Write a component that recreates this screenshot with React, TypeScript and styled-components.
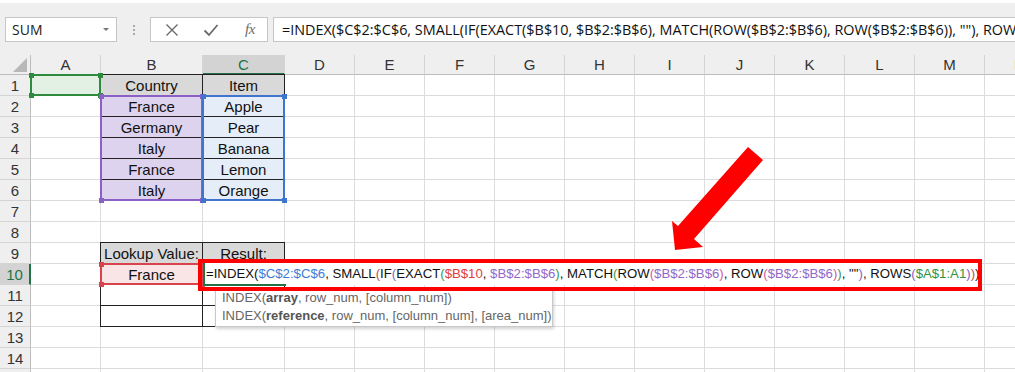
import React from "react";
import styled, { createGlobalStyle } from "styled-components";

const GlobalStyle = createGlobalStyle`
  html, body { margin: 0; padding: 0; background: #fff; }
  body { overflow: hidden; }
`;

const UI_FONT = `"Open Sans", "Noto Sans", sans-serif`;
const CELL_FONT = `"Liberation Sans", Arial, sans-serif`;
const GREEN = "#217346";

const Page = styled.div`
  width: 1015px;
  height: 372px;
  overflow: hidden;
  background: #fff;
  display: flex;
  flex-direction: column;
`;

const Toolbar = styled.div`
  flex: none;
  height: 55px;
  box-sizing: border-box;
  border-top: 3px solid #fff;
  background: #efefef;
  padding: 14px 0 0 5px;
  display: flex;
  align-items: flex-start;
`;

const NameBox = styled.div`
  width: 112px;
  height: 25px;
  box-sizing: border-box;
  border: 1px solid #c6c6c6;
  background: #fff;
  display: flex;
  align-items: center;
  justify-content: space-between;
  padding: 0 7px 0 6px;
  font: 14px ${UI_FONT};
  color: #222;
`;

const Caret = styled.span`
  width: 0;
  height: 0;
  border-left: 3px solid transparent;
  border-right: 3px solid transparent;
  border-top: 3px solid #777;
`;

const Grip = styled.div`
  width: 33px;
  height: 25px;
  display: flex;
  flex-direction: column;
  align-items: center;
  justify-content: center;
  gap: 2px;
  span {
    width: 2px;
    height: 2px;
    background: #a8a8a8;
  }
`;

const ButtonBox = styled.div`
  width: 118px;
  height: 25px;
  box-sizing: border-box;
  border: 1px solid #c6c6c6;
  background: #fff;
  display: flex;
  align-items: center;
  padding-left: 13px;
  gap: 23px;
`;

const IconSlot = styled.span`
  width: 16px;
  height: 16px;
  display: flex;
  align-items: center;
  justify-content: center;
  color: #6b6b6b;
`;

const Fx = styled.span`
  font: italic 15px "Liberation Serif", serif;
  color: #6b6b6b;
  letter-spacing: -0.5px;
`;

const FormulaBox = styled.div`
  flex: 1;
  margin-left: 5px;
  height: 25px;
  box-sizing: border-box;
  border: 1px solid #c6c6c6;
  border-right: none;
  background: #fff;
  padding-left: 8px;
  font: 14.4px/23px ${UI_FONT};
  color: #111;
  white-space: pre;
  overflow: hidden;
`;

const Sheet = styled.div`
  position: relative;
  flex: none;
  display: grid;
  grid-template-columns: 31px 70px 102px 82px repeat(11, 70px);
  grid-template-rows: 20px repeat(15, 21px);
  font: 15px ${CELL_FONT};
`;

const Corner = styled.div`
  grid-column: 1;
  grid-row: 1;
  background: #efefef;
  border-right: 1px solid #bdbdbd;
  border-bottom: 1px solid #bdbdbd;
  display: flex;
  align-items: flex-end;
  justify-content: flex-end;
  padding: 0 3px 2px 0;
  &::before {
    content: "";
    width: 0;
    height: 0;
    border-left: 14px solid transparent;
    border-bottom: 14px solid #b8b8b8;
  }
`;

const ColHeader = styled.div<{ $col: number; $active?: boolean }>`
  grid-column: ${(p) => p.$col};
  grid-row: 1;
  background: ${(p) => (p.$active ? "#d3d3d3" : "#efefef")};
  color: ${(p) => (p.$active ? GREEN : "#333")};
  border-right: 1px solid #d4d4d4;
  border-bottom: ${(p) => (p.$active ? `2px solid ${GREEN}` : "1px solid #bdbdbd")};
  display: flex;
  align-items: center;
  justify-content: center;
  line-height: 1;
`;

const RowHeader = styled.div<{ $row: number; $active?: boolean }>`
  grid-column: 1;
  grid-row: ${(p) => p.$row};
  background: ${(p) => (p.$active ? "#d3d3d3" : "#efefef")};
  color: ${(p) => (p.$active ? GREEN : "#333")};
  border-right: ${(p) => (p.$active ? `2px solid ${GREEN}` : "1px solid #bdbdbd")};
  border-bottom: 1px solid #d4d4d4;
  display: flex;
  align-items: center;
  justify-content: center;
`;

const Cell = styled.div<{ $col: number; $row: number; $fill?: string; $table?: boolean }>`
  grid-column: ${(p) => p.$col};
  grid-row: ${(p) => p.$row};
  position: relative;
  background: ${(p) => p.$fill || "#fff"};
  border-right: 1px solid #dcdcdc;
  border-bottom: 1px solid #dcdcdc;
  display: flex;
  align-items: center;
  justify-content: center;
  white-space: nowrap;
  color: #111;
  ${(p) =>
    p.$table &&
    `
    &::before {
      content: "";
      position: absolute;
      top: -1px; left: -1px; right: -1px; bottom: -1px;
      border: 1px solid #222;
      z-index: 1;
      pointer-events: none;
    }
  `}
`;

const RangeBox = styled.div<{ $col: string; $row: string; $color: string }>`
  grid-column: ${(p) => p.$col};
  grid-row: ${(p) => p.$row};
  position: relative;
  z-index: 2;
  margin: -1px 0 0 -1px;
  border: 2px solid ${(p) => p.$color};
  pointer-events: none;
  span {
    position: absolute;
    width: 5px;
    height: 5px;
    background: ${(p) => p.$color};
  }
  span:nth-child(1) { left: -3.5px; top: -3.5px; }
  span:nth-child(2) { right: -3.5px; top: -3.5px; }
  span:nth-child(3) { left: -3.5px; bottom: -3.5px; }
  span:nth-child(4) { right: -3.5px; bottom: -3.5px; }
`;

const EditCell = styled.div`
  grid-column: 4 / 15;
  grid-row: 11;
  position: relative;
  z-index: 3;
  margin: -1px 4px 0 0;
  background: #fff;
  border-left: 2px solid ${GREEN};
  padding-left: 1px;
  font: 13.2px/22px ${CELL_FONT};
  white-space: pre;
  &::after {
    content: "";
    position: absolute;
    left: -2px;
    top: 21px;
    width: 83px;
    height: 2px;
    background: ${GREEN};
  }
`;

const Callout = styled.div`
  position: absolute;
  left: 198px;
  top: 204px;
  width: 784px;
  height: 32px;
  box-sizing: border-box;
  border: 4px solid #ff0000;
  z-index: 4;
`;

const Tooltip = styled.div`
  position: absolute;
  left: 215px;
  top: 232px;
  width: 338px;
  height: 40px;
  box-sizing: border-box;
  background: #fff;
  border: 1px solid #c9c9c9;
  box-shadow: 1px 2px 3px rgba(0, 0, 0, 0.18);
  padding: 1px 0 0 6px;
  z-index: 3;
  font: 13px ${CELL_FONT};
  color: #666;
  line-height: 18px;
  b {
    color: #555;
  }
`;

const Arrow = styled.svg`
  position: absolute;
  left: 660px;
  top: 85px;
  z-index: 5;
`;

const K = "#111";
const BLUE = "#3d7bd6";
const RED = "#e03c3c";
const PURPLE = "#9168c9";
const REFGREEN = "#2f9440";
const P2 = "#c0504d";
const P3 = "#8a63c4";
const P4 = "#3f9a4a";
const P5 = "#d65b9a";

const formulaParts: [string, string][] = [
  ["=INDEX(", K],
  ["$C$2:$C$6", BLUE],
  [", SMALL", K],
  ["(", P2],
  ["IF", K],
  ["(", P3],
  ["EXACT", K],
  ["(", P4],
  ["$B$10", RED],
  [", ", K],
  ["$B$2:$B$6", PURPLE],
  [")", P4],
  [", MATCH", K],
  ["(", P4],
  ["ROW", K],
  ["(", P5],
  ["$B$2:$B$6", PURPLE],
  [")", P5],
  [", ROW", K],
  ["(", P5],
  ["$B$2:$B$6", PURPLE],
  [")", P5],
  [")", P4],
  [', ""', K],
  [")", P3],
  [", ROWS", K],
  ["(", P3],
  ["$A$1:A1", REFGREEN],
  [")", P3],
  [")", P2],
  [")", K],
];

const formulaText = formulaParts.map((p) => p[0]).join("");

const letters = ["A", "B", "C", "D", "E", "F", "G", "H", "I", "J", "K", "L", "M", "N"];

type CellDef = { text?: string; fill?: string; table?: boolean };

const GRAY = "#d9d9d9";
const PURPLE_FILL = "#ddd3ee";
const BLUE_FILL = "#e5edf8";

const cells: Record<string, CellDef> = {
  A1: { fill: "#e3f0e4" },
  B1: { text: "Country", fill: GRAY, table: true },
  C1: { text: "Item", fill: GRAY, table: true },
  B9: { text: "Lookup Value:", fill: GRAY, table: true },
  C9: { text: "Result:", fill: GRAY, table: true },
  B10: { text: "France", fill: "#f9e4e6", table: true },
  C10: { table: true },
  B11: { table: true },
  C11: { table: true },
  B12: { table: true },
  C12: { table: true },
};

const countries = ["France", "Germany", "Italy", "France", "Italy"];
const items = ["Apple", "Pear", "Banana", "Lemon", "Orange"];
countries.forEach((c, i) => {
  cells[`B${i + 2}`] = { text: c, fill: PURPLE_FILL, table: true };
  cells[`C${i + 2}`] = { text: items[i], fill: BLUE_FILL, table: true };
});

const Handles = () => (
  <>
    <span />
    <span />
    <span />
    <span />
  </>
);

export default function App() {
  const rows = Array.from({ length: 15 }, (_, i) => i + 1);
  return (
    <Page>
      <GlobalStyle />
      <Toolbar>
        <NameBox>
          SUM
          <Caret />
        </NameBox>
        <Grip>
          <span />
          <span />
          <span />
        </Grip>
        <ButtonBox>
          <IconSlot>
            <svg width="14" height="14" viewBox="0 0 14 14">
              <path d="M1.5 1.5 L12.5 12.5 M12.5 1.5 L1.5 12.5" stroke="currentColor" strokeWidth="1.4" />
            </svg>
          </IconSlot>
          <IconSlot>
            <svg width="16" height="14" viewBox="0 0 16 14">
              <path d="M1.5 7.5 L6 12 L14.5 2" stroke="currentColor" strokeWidth="1.8" fill="none" />
            </svg>
          </IconSlot>
          <IconSlot>
            <Fx>fx</Fx>
          </IconSlot>
        </ButtonBox>
        <FormulaBox>{formulaText}</FormulaBox>
      </Toolbar>
      <Sheet>
        <Corner />
        {letters.map((l, ci) => (
          <ColHeader key={l} $col={ci + 2} $active={l === "C"}>
            {l}
          </ColHeader>
        ))}
        {rows.map((r) => (
          <React.Fragment key={r}>
            <RowHeader $row={r + 1} $active={r === 10}>
              {r}
            </RowHeader>
            {letters.map((l, ci) => {
              const def = cells[`${l}${r}`] || {};
              return (
                <Cell key={l} $col={ci + 2} $row={r + 1} $fill={def.fill} $table={def.table}>
                  {def.text}
                </Cell>
              );
            })}
          </React.Fragment>
        ))}
        <RangeBox $col="2" $row="2" $color="#2e8b3e">
          <Handles />
        </RangeBox>
        <RangeBox $col="3" $row="3 / 8" $color="#8a5fc6">
          <Handles />
        </RangeBox>
        <RangeBox $col="4" $row="3 / 8" $color="#3f74cf">
          <Handles />
        </RangeBox>
        <RangeBox $col="3" $row="11" $color="#d8434c">
          <Handles />
        </RangeBox>
        <EditCell>
          {formulaParts.map(([t, c], i) => (
            <span key={i} style={{ color: c }}>
              {t}
            </span>
          ))}
        </EditCell>
        <Callout />
        <Tooltip>
          <div>
            INDEX(<b>array</b>, row_num, [column_num])
          </div>
          <div>
            INDEX(<b>reference</b>, row_num, [column_num], [area_num])
          </div>
        </Tooltip>
        <Arrow width="110" height="115" viewBox="0 0 110 115">
          <polygon points="88,7 103,20 34,99 43,107 15,110 12,81 18,86" fill="#ff0000" />
        </Arrow>
      </Sheet>
    </Page>
  );
}
